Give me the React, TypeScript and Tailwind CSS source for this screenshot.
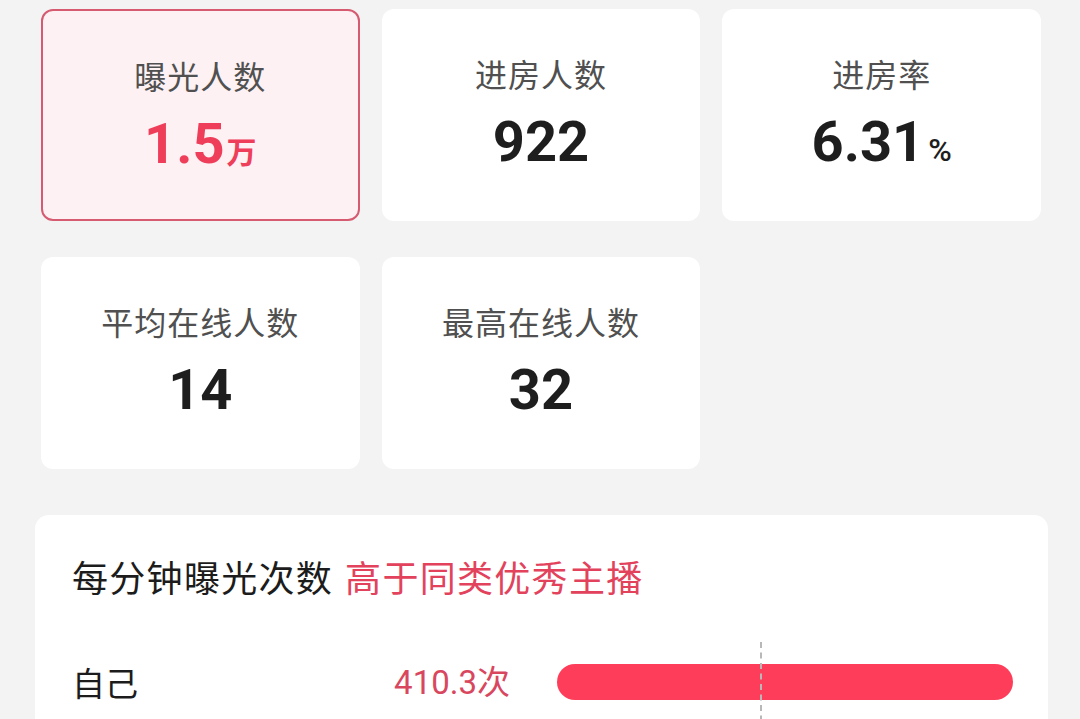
const CJK = "font-['Noto_Sans_CJK_SC','Noto_Sans',sans-serif]";
const NUM = "font-['Roboto','Noto_Sans_CJK_SC',sans-serif]";

type Stat = { label: string; value: string; unit?: string; active?: boolean };

const stats: Stat[] = [
  { label: "曝光人数", value: "1.5", unit: "万", active: true },
  { label: "进房人数", value: "922" },
  { label: "进房率", value: "6.31", unit: "%" },
  { label: "平均在线人数", value: "14" },
  { label: "最高在线人数", value: "32" },
];

function StatCard({ s }: { s: Stat }) {
  return (
    <div
      className={
        "flex h-[212px] flex-col items-center rounded-[12px] pt-[42px] " +
        (s.active ? "border-2 border-[#d65a70] bg-[#fdf1f4]" : "bg-white")
      }
    >
      <div className={`${CJK} text-[32px] leading-[44px] tracking-[1px] text-[#505050]`}>{s.label}</div>
      <div className={`mt-[13px] flex items-baseline ${s.active ? "text-[#ef3e5a]" : "text-[#1e1e1e]"}`}>
        <span className={`${NUM} text-[56px] font-bold leading-[68px]`}>{s.value}</span>
        {s.unit === "%" ? (
          <span className={`${NUM} ml-[4px] text-[32px] font-medium`}>%</span>
        ) : s.unit ? (
          <span className={`${CJK} ml-[2px] text-[30px] font-bold`}>{s.unit}</span>
        ) : null}
      </div>
    </div>
  );
}

export default function App() {
  return (
    <main className="min-h-screen overflow-hidden bg-[#f3f3f3] pt-[9px]">
      <div className="grid grid-cols-3 gap-x-[22px] gap-y-[36px] pl-[41px] pr-[39px]">
        {stats.map((s) => (
          <StatCard key={s.label} s={s} />
        ))}
      </div>

      <section className="ml-[35px] mr-[32px] mt-[46px] h-[220px] rounded-t-[14px] bg-white pl-[37px] pr-[35px] pt-[38px]">
        <h2 className={`${CJK} text-[36px] leading-[46px] tracking-[1.3px] text-[#1c1c1c]`}>
          每分钟曝光次数<span className="ml-[12px] text-[#e3425c]">高于同类优秀主播</span>
        </h2>

        <div className="relative mt-[57px] flex items-center">
          <span className={`${CJK} w-[250px] text-[33px] leading-[44px] text-[#1c1c1c]`}>自己</span>
          <span className={`${NUM} w-[188px] text-right text-[33px] text-[#d9475f]`}>
            410.3<span className={CJK}>次</span>
          </span>
          <div className="ml-[47px] h-[36px] w-[456px] rounded-full bg-[#fe3d5a]" />
          <div className="absolute left-[688px] top-[-14px] h-[90px] border-l-2 border-dashed border-[#b8b8b8]" />
        </div>
      </section>
    </main>
  );
}
